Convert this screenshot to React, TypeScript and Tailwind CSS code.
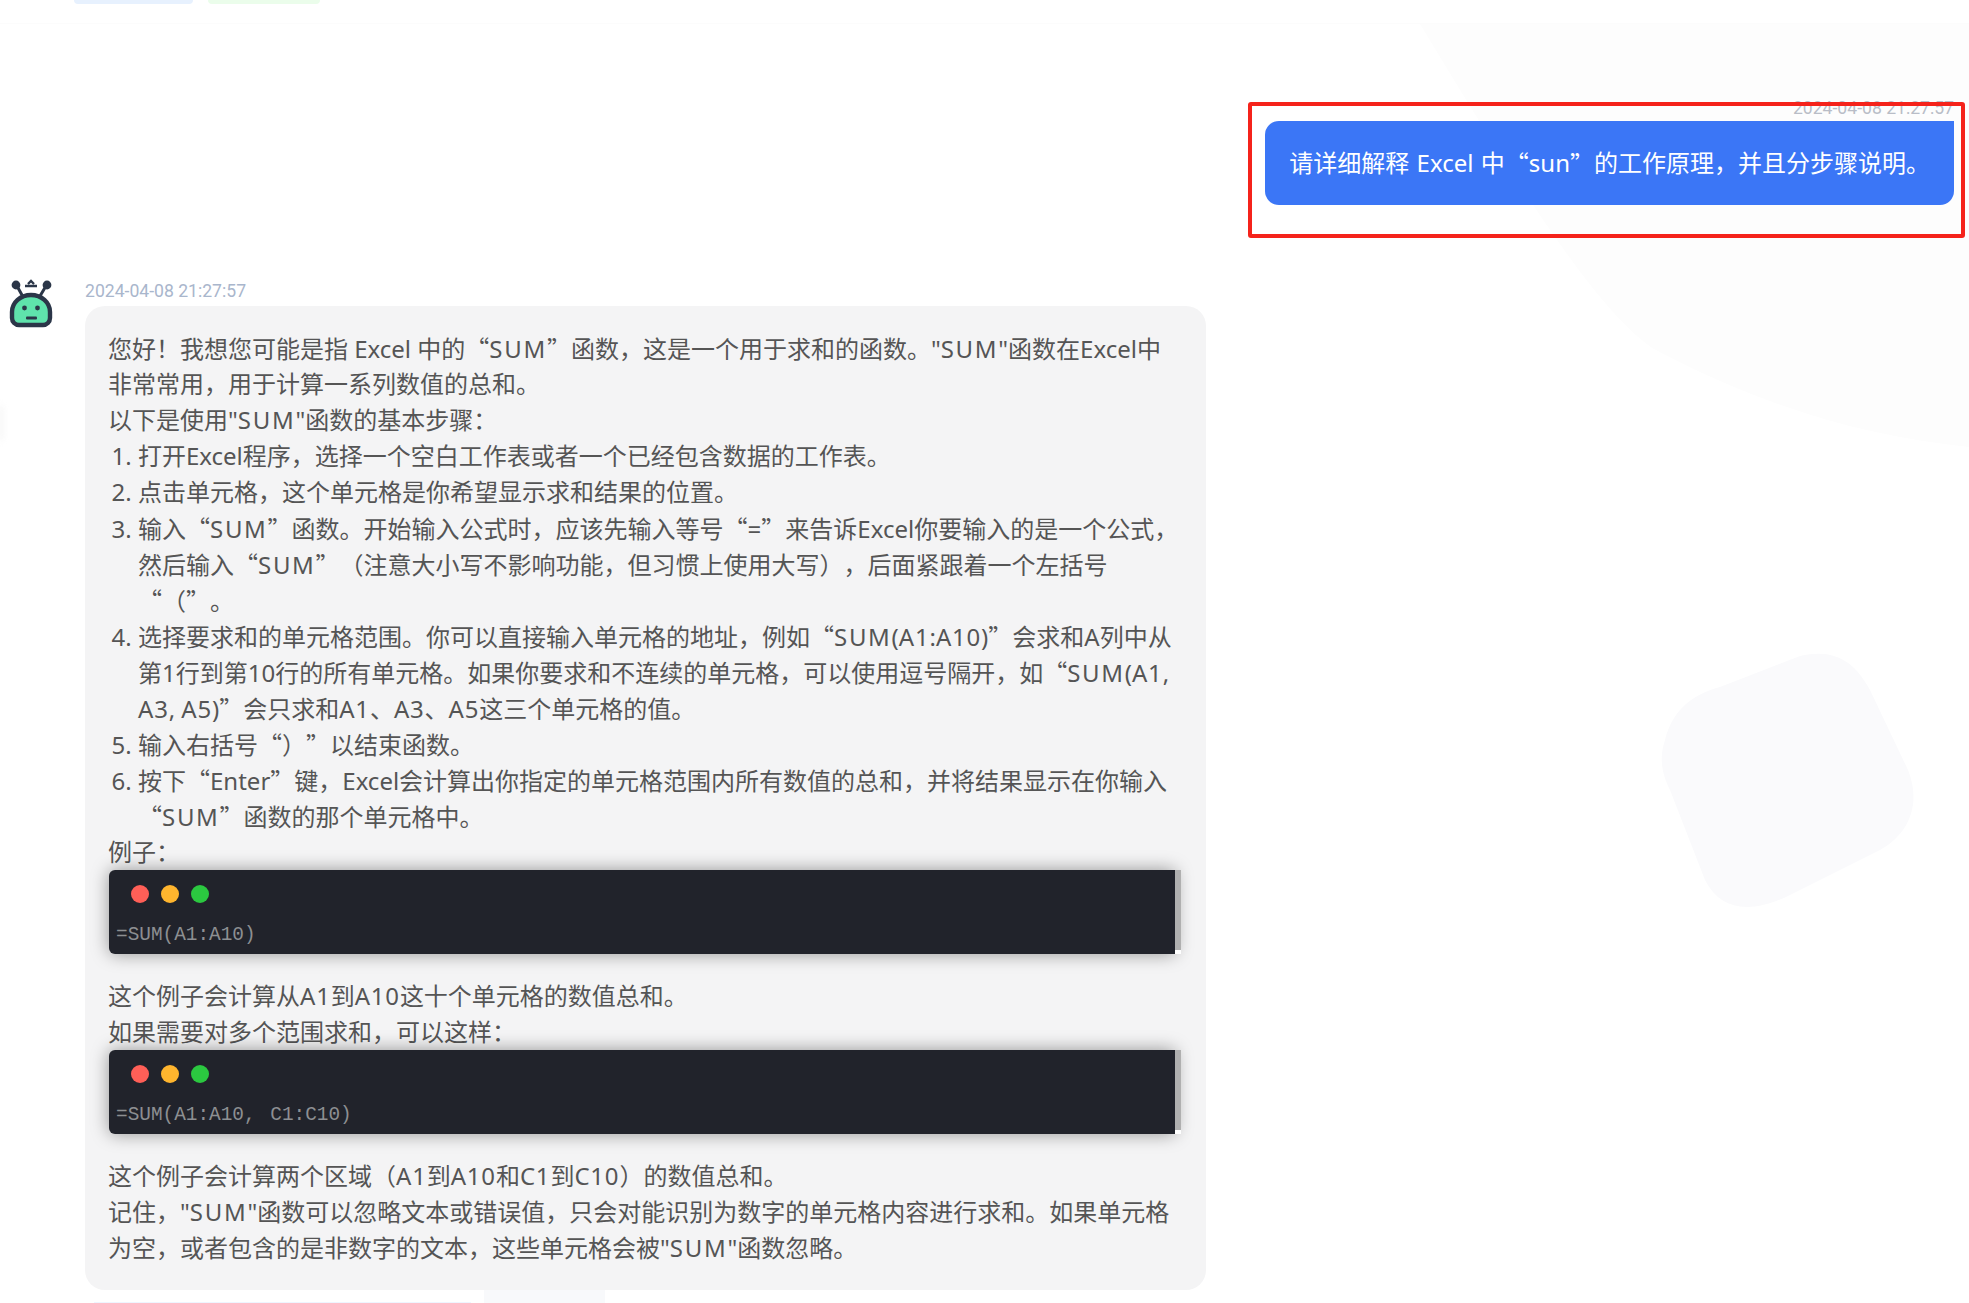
import React from "react";

function T({ s }: { s: string }) {
  const parts = s.split(/([“”]|SUM|[AC]\d+)/);
  return (
    <>
      {parts.map((p, i) =>
        p === "“" || p === "”" ? (
          <span key={i} className="font-['Noto_Sans_CJK_SC',sans-serif]">{p}</span>
        ) : p === "SUM" ? (
          <span key={i} className="tracking-[1.7px]">{p}</span>
        ) : /^[AC]\d+$/.test(p) ? (
          <span key={i} className="tracking-[0.8px]">{p}</span>
        ) : (
          <React.Fragment key={i}>{p}</React.Fragment>
        )
      )}
    </>
  );
}

function Lines({ lines }: { lines: string[] }) {
  return (
    <>
      {lines.map((l, i) => (
        <div key={i} className="whitespace-pre h-[36px]">
          <T s={l} />
        </div>
      ))}
    </>
  );
}

function Code({ text, className }: { text: string; className?: string }) {
  return (
    <div className={"relative ml-px w-[1066px] h-[84px] rounded-l-[6px] bg-[#21232b] pt-[15px] pl-[7px] shadow-[0_0_18px_rgba(0,0,0,0.4)] " + (className ?? "")}>
      <div className="absolute -right-[6px] top-0 bottom-[4px] w-[6px] bg-[#b0b0b0]" />
      <div className="absolute -right-[6px] bottom-0 h-[4px] w-[6px] bg-white" />
      <div className="flex gap-[12px] pl-[15px]">
        <span className="w-[18px] h-[18px] rounded-full bg-[#ff5f57]" />
        <span className="w-[18px] h-[18px] rounded-full bg-[#ffb52e]" />
        <span className="w-[18px] h-[18px] rounded-full bg-[#2bc840]" />
      </div>
      <div className="mt-[17px] h-[30px] leading-[30px] text-[19.4px] [word-spacing:3px] whitespace-pre text-[#8d8f92] font-['Liberation_Mono','Noto_Sans_CJK_SC',monospace]">
        {text}
      </div>
    </div>
  );
}

function Avatar() {
  return (
    <svg viewBox="0 0 70 70" className="w-[70px] h-[70px] shrink-0" fill="none">
      <path d="M12 42a19 17 0 0 1 38 0v6a7 7 0 0 1-7 7H19a7 7 0 0 1-7-7Z" fill="#5fe3ac" stroke="#2b3648" strokeWidth="4.4" />
      <path d="M17 16l5.5 10M46 16l-6 10" stroke="#2b3648" strokeWidth="3" />
      <circle cx="16" cy="15" r="4.4" fill="#2b3648" />
      <circle cx="47" cy="15" r="4.4" fill="#2b3648" />
      <path d="M25 16h12M28 14l3-3 3 3" stroke="#2b3648" strokeWidth="2.4" />
      <circle cx="24.5" cy="38" r="2.4" fill="#2b3648" />
      <circle cx="37.5" cy="38" r="2.4" fill="#2b3648" />
      <rect x="26" y="46.5" width="11" height="3" rx="1" fill="#2b3648" />
    </svg>
  );
}

export default function App() {
  return (
    <div className="relative w-full h-[1303px] overflow-hidden bg-white [text-spacing-trim:space-all] font-['Noto_Sans','Noto_Sans_CJK_SC',sans-serif]">
      <svg className="absolute inset-0 w-[1969px] h-[1303px]" viewBox="0 0 1969 1303" fill="none">
        <path d="M1420 24H1969V447C1860 436 1760 405 1654 349C1600 315 1520 190 1420 24Z" fill="#fdfdfd" />
        <path d="M1665 740C1672 712 1690 695 1720 687L1800 656C1835 648 1855 662 1870 690L1908 770C1922 805 1908 835 1880 850L1790 895C1750 915 1720 910 1705 880L1670 790C1660 770 1660 755 1665 740Z" fill="#fafafc" />
      </svg>
      <div className="absolute left-[-4px] top-[405px] w-[8px] h-[36px] rounded-full bg-[#f8f8f8] blur-[3px]" />

      <div className="relative">
        <div className="flex pl-[74px] gap-[15px]">
          <div className="w-[119px] h-[4px] rounded-b-[4px] bg-[#e7f1fe]" />
          <div className="w-[112px] h-[4px] rounded-b-[4px] bg-[#ebfdeb]" />
        </div>
        <div className="mt-[19px] h-px bg-[#fcfcfc]" />

        <div className="mt-[72px] flex flex-col items-end pr-[15px]">
          <div className="h-[24px] leading-[24px] text-[17.6px] text-[#b9bdc7] font-['Roboto',sans-serif]">2024-04-08 21:27:57</div>
          <div className="mt-px h-[84px] pl-[24px] pr-[24px] flex items-center rounded-l-[14px] rounded-br-[14px] bg-[#3b76f6] text-white text-[24px] leading-[36px] [word-spacing:1.2px] whitespace-pre">
            <T s="请详细解释 Excel 中“sun”的工作原理，并且分步骤说明。" />
          </div>
        </div>

        <div className="mt-[73px] flex">
          <div className="-mt-[8px] w-[85px] shrink-0">
            <Avatar />
          </div>
          <div>
            <div className="h-[24px] mt-px -mb-px leading-[24px] text-[17.6px] text-[#a9b6cc] font-['Roboto',sans-serif]">2024-04-08 21:27:57</div>
            <div className="mt-[4px] w-[1121px] rounded-[20px] bg-[#f4f4f5] pl-[23px] pt-[24px] pb-[24px] text-[24px] leading-[36px] text-[#555]">
              <Lines lines={[
                "您好！我想您可能是指 Excel 中的“SUM”函数，这是一个用于求和的函数。\"SUM\"函数在Excel中",
                "非常常用，用于计算一系列数值的总和。",
                "以下是使用\"SUM\"函数的基本步骤：",
              ]} />
              <ol className="list-decimal pl-[30px]">
                <li><Lines lines={["打开Excel程序，选择一个空白工作表或者一个已经包含数据的工作表。"]} /></li>
                <li><Lines lines={["点击单元格，这个单元格是你希望显示求和结果的位置。"]} /></li>
                <li><Lines lines={[
                  "输入“SUM”函数。开始输入公式时，应该先输入等号“=”来告诉Excel你要输入的是一个公式，",
                  "然后输入“SUM”（注意大小写不影响功能，但习惯上使用大写），后面紧跟着一个左括号",
                  "“（”。",
                ]} /></li>
                <li><Lines lines={[
                  "选择要求和的单元格范围。你可以直接输入单元格的地址，例如“SUM(A1:A10)”会求和A列中从",
                  "第1行到第10行的所有单元格。如果你要求和不连续的单元格，可以使用逗号隔开，如“SUM(A1,",
                  "A3, A5)”会只求和A1、A3、A5这三个单元格的值。",
                ]} /></li>
                <li><Lines lines={["输入右括号“）”以结束函数。"]} /></li>
                <li><Lines lines={[
                  "按下“Enter”键，Excel会计算出你指定的单元格范围内所有数值的总和，并将结果显示在你输入",
                  "“SUM”函数的那个单元格中。",
                ]} /></li>
              </ol>
              <Lines lines={["例子："]} />
              <Code text="=SUM(A1:A10)" className="mb-[24px]" />
              <Lines lines={["这个例子会计算从A1到A10这十个单元格的数值总和。", "如果需要对多个范围求和，可以这样："]} />
              <Code text="=SUM(A1:A10, C1:C10)" className="mb-[24px]" />
              <Lines lines={[
                "这个例子会计算两个区域（A1到A10和C1到C10）的数值总和。",
                "记住，\"SUM\"函数可以忽略文本或错误值，只会对能识别为数字的单元格内容进行求和。如果单元格",
                "为空，或者包含的是非数字的文本，这些单元格会被\"SUM\"函数忽略。",
              ]} />
            </div>
            <div className="flex items-end h-[13px] pl-[9px]">
              <div className="w-[377px] h-px bg-[#eef5ff]" />
              <div className="ml-[13px] w-[121px] h-[13px] bg-[#f8f9fb]" />
            </div>
          </div>
        </div>
      </div>

      <div className="absolute left-[1248px] top-[102px] w-[717px] h-[136px] border-[4px] border-[#f5231b] rounded-[3px]" />
    </div>
  );
}
